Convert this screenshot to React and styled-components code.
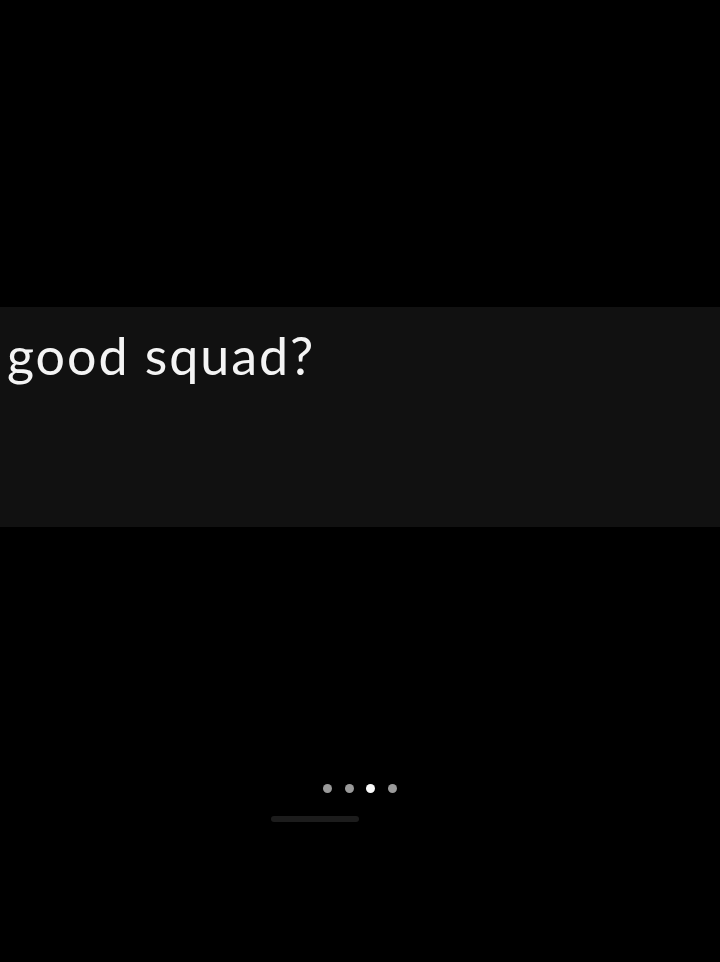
import React from "react"
import styled, { createGlobalStyle } from "styled-components"

const GlobalStyle = createGlobalStyle`
  html, body {
    margin: 0;
    padding: 0;
    background: #000;
  }
  body {
    font-family: "Lato", "Noto Sans", sans-serif;
  }
`

const Screen = styled.div`
  width: 720px;
  height: 962px;
  background: #000;
  display: flex;
  flex-direction: column;
  overflow: hidden;
`

const Caption = styled.section`
  margin-top: 307px;
  height: 220px;
  background: #111111;
  padding: 18px 0 0 7px;
  box-sizing: border-box;
`

const CaptionText = styled.h1`
  margin: 0;
  color: #f4f4f4;
  font-family: "Lato", sans-serif;
  font-weight: 400;
  font-size: 52px;
  line-height: 60px;
  letter-spacing: 1.95px;
`

const Pager = styled.div`
  margin-top: 257px;
  display: flex;
  justify-content: center;
  gap: 12.7px;
`

const Dot = styled.span`
  width: 9px;
  height: 9px;
  border-radius: 50%;
  background: ${(p) => (p.$active ? "#fafafa" : "#9a9a9a")};
`

const HomeBar = styled.div`
  margin: 23px 0 0 271px;
  width: 88px;
  height: 6px;
  border-radius: 3px;
  background: #1c1c1c;
`

function App() {
  const pages = [false, false, true, false]
  return (
    <Screen>
      <GlobalStyle />
      <Caption>
        <CaptionText>good squad?</CaptionText>
      </Caption>
      <Pager>
        {pages.map((active, i) => (
          <Dot key={i} $active={active} />
        ))}
      </Pager>
      <HomeBar />
    </Screen>
  )
}

export default App
